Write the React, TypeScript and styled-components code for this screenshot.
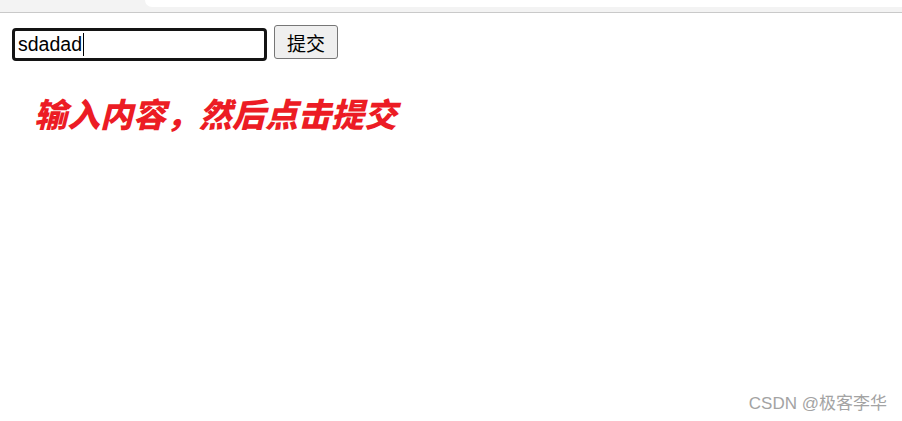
import React from "react";
import styled, { createGlobalStyle } from "styled-components";

const GlobalStyle = createGlobalStyle`
  html, body {
    margin: 0;
    padding: 0;
    background: #ffffff;
  }
  body {
    font-family: "Liberation Sans", "Noto Sans CJK SC", sans-serif;
  }
`;

const Page = styled.div`
  position: relative;
  width: 902px;
  height: 421px;
  overflow: hidden;
  background: #ffffff;
`;

const TabStrip = styled.div`
  display: flex;
  height: 12px;
  background: #f3f3f3;
  border-bottom: 1px solid #c9c9c9;
`;

const TabGap = styled.div`
  width: 145px;
  flex-shrink: 0;
`;

const ActiveTab = styled.div`
  flex: 1;
  height: 7px;
  background: #ffffff;
  border-bottom-left-radius: 8px;
`;

const FormRow = styled.div`
  display: flex;
  align-items: flex-start;
  gap: 7px;
  padding: 12px 0 0 12px;
`;

const Field = styled.div`
  box-sizing: border-box;
  display: flex;
  align-items: center;
  width: 255px;
  height: 33px;
  margin-top: 3px;
  padding: 0 3px;
  border: 3px solid #141414;
  border-radius: 4px;
  font-family: "Liberation Sans", Arial, sans-serif;
  font-size: 19.5px;
  color: #000000;
`;

const Caret = styled.span`
  display: inline-block;
  width: 1px;
  height: 23px;
  margin-left: 1px;
  background: #000000;
`;

const SubmitButton = styled.button`
  box-sizing: border-box;
  width: 64px;
  height: 34px;
  padding: 0;
  background: #efefef;
  border: 1px solid #767676;
  border-radius: 3px;
  font-family: "Noto Sans CJK SC", sans-serif;
  font-size: 19px;
  color: #000000;
`;

const Heading = styled.h1`
  margin: 32px 0 0 34px;
  font-family: "Noto Sans CJK SC", sans-serif;
  font-size: 33px;
  line-height: 40px;
  font-weight: 900;
  font-style: italic;
  color: #ec1c24;
`;

const Watermark = styled.div`
  position: absolute;
  right: 15px;
  bottom: 7px;
  font-family: "Liberation Sans", "Noto Sans CJK SC", sans-serif;
  font-size: 17px;
  color: #a3a3a3;
`;

export default function App() {
  return (
    <Page>
      <GlobalStyle />
      <TabStrip>
        <TabGap />
        <ActiveTab />
      </TabStrip>
      <FormRow>
        <Field>
          sdadad
          <Caret />
        </Field>
        <SubmitButton type="button">提交</SubmitButton>
      </FormRow>
      <Heading>输入内容，然后点击提交</Heading>
      <Watermark>CSDN @极客李华</Watermark>
    </Page>
  );
}
